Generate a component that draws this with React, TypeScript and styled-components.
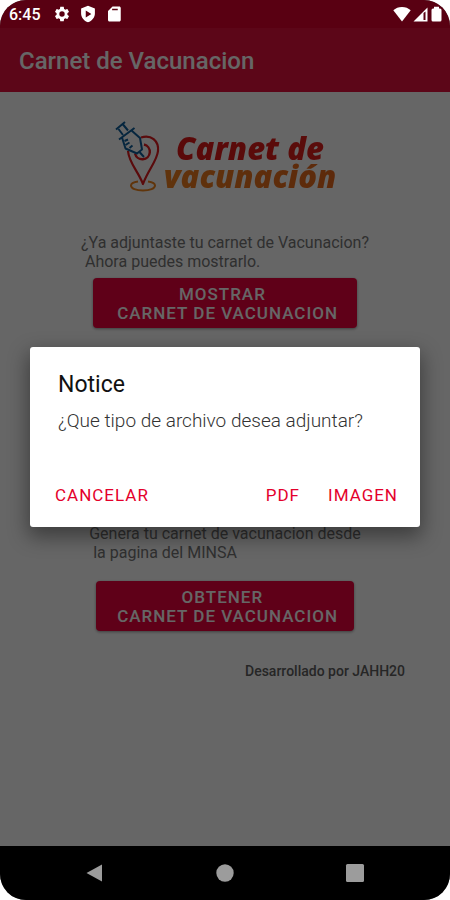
import styled, { createGlobalStyle } from "styled-components";

const App = () => {
  return (
    <>
      <GlobalStyle />
      <Screen>
        <StatusBar>
          <StatusGroup>
            <Clock>6:45</Clock>
            <SettingsIcon />
            <ShieldIcon />
            <SdCardIcon />
          </StatusGroup>
          <StatusGroup $tight>
            <WifiIcon />
            <SignalIcon />
            <BatteryIcon />
          </StatusGroup>
        </StatusBar>

        <AppBar>
          <AppTitle>Carnet de Vacunacion</AppTitle>
        </AppBar>

        <Content>
          <Logo>
            <PinIcon />
            <LogoText>
              <LogoLine $from="#e01818" $to="#e0201c">
                Carnet de
              </LogoLine>
              <LogoLine $from="#f08020" $to="#e8681c">
                vacunación
              </LogoLine>
            </LogoText>
          </Logo>

          <Section>
            <Description>
              {"¿Ya adjuntaste tu carnet de Vacunacion?\n Ahora puedes mostrarlo."}
            </Description>
            <MainButton $padding={19}>
              {"MOSTRAR \n CARNET DE VACUNACION"}
            </MainButton>
          </Section>

          <Section $spaced>
            <Description>
              {"Genera tu carnet de vacunacion desde\n la pagina del MINSA"}
            </Description>
            <MainButton $padding={16}>
              {"OBTENER \n CARNET DE VACUNACION"}
            </MainButton>
          </Section>

          <Credits>Desarrollado por JAHH20</Credits>
        </Content>

        <Scrim>
          <Dialog role="dialog" aria-labelledby="notice-title">
            <DialogTitle id="notice-title">Notice</DialogTitle>
            <DialogMessage>¿Que tipo de archivo desea adjuntar?</DialogMessage>
            <DialogActions>
              <DialogButton>CANCELAR</DialogButton>
              <Spacer />
              <DialogButton>PDF</DialogButton>
              <DialogButton>IMAGEN</DialogButton>
            </DialogActions>
          </Dialog>
        </Scrim>

        <NavBar>
          <NavButton aria-label="Back">
            <svg width="20" height="20" viewBox="0 0 20 20">
              <path d="M17 1.5v17L1.5 10z" />
            </svg>
          </NavButton>
          <NavButton aria-label="Home">
            <svg width="20" height="20" viewBox="0 0 20 20">
              <circle cx="10" cy="10" r="8.7" />
            </svg>
          </NavButton>
          <NavButton aria-label="Recents">
            <svg width="20" height="20" viewBox="0 0 20 20">
              <rect x="1" y="1" width="18" height="18" rx="1.5" />
            </svg>
          </NavButton>
        </NavBar>
      </Screen>
    </>
  );
};

export default App;

const SettingsIcon = () => (
  <svg width="18" height="18" viewBox="0 0 24 24" fill="#fff">
    <path d="M19.14 12.94c.04-.3.06-.61.06-.94 0-.32-.02-.64-.07-.94l2.03-1.58c.18-.14.23-.41.12-.61l-1.92-3.32c-.12-.22-.37-.29-.59-.22l-2.39.96c-.5-.38-1.03-.7-1.62-.94l-.36-2.54c-.04-.24-.24-.41-.48-.41h-3.84c-.24 0-.43.17-.47.41l-.36 2.54c-.59.24-1.13.57-1.62.94l-2.39-.96c-.22-.08-.47 0-.59.22L2.74 8.87c-.12.21-.08.47.12.61l2.03 1.58c-.05.3-.09.63-.09.94s.02.64.07.94l-2.03 1.58c-.18.14-.23.41-.12.61l1.92 3.32c.12.22.37.29.59.22l2.39-.96c.5.38 1.03.7 1.62.94l.36 2.54c.05.24.24.41.48.41h3.84c.24 0 .44-.17.47-.41l.36-2.54c.59-.24 1.13-.56 1.62-.94l2.39.96c.22.08.47 0 .59-.22l1.92-3.32c.12-.22.07-.47-.12-.61l-2.01-1.58zM12 15.6A3.6 3.6 0 1 1 12 8.4a3.6 3.6 0 0 1 0 7.2z" />
  </svg>
);

const ShieldIcon = () => (
  <svg width="18" height="18" viewBox="0 0 24 24" fill="#fff">
    <path
      fillRule="evenodd"
      d="M12 1L2.8 4.6v6.8c0 5.2 3.9 10 9.2 11.6 5.3-1.6 9.2-6.4 9.2-11.6V4.6zM9 7.2l7.5 4.8L9 16.8z"
    />
  </svg>
);

const SdCardIcon = () => (
  <svg width="18" height="18" viewBox="0 0 24 24" fill="#fff">
    <path
      fillRule="evenodd"
      d="M19 2h-9L4 8v12c0 1.1.9 2 2 2h13c1.1 0 2-.9 2-2V4c0-1.1-.9-2-2-2zM9.5 5h7.5v2H9.5z"
    />
  </svg>
);

const WifiIcon = () => (
  <svg width="18" height="16" viewBox="0 0 18 16" fill="#fff">
    <path d="M9 15.5L.3 4.3C2.6 2.2 5.6 1 9 1s6.4 1.2 8.7 3.3z" />
  </svg>
);

const SignalIcon = () => (
  <svg width="16" height="16" viewBox="0 0 16 16">
    <path d="M.5 15.5L14.5 1.5v14z" fill="#fff" />
    <path d="M10.5 7l2-1.5v8.5h-2z" fill="#590012" />
  </svg>
);

const BatteryIcon = () => (
  <svg width="11" height="16" viewBox="0 0 11 16" fill="#fff">
    <path d="M3 .8h5v1.7h1q1.5 0 1.5 1.5v10q0 1.5-1.5 1.5h-7Q.5 15.5.5 14V4q0-1.5 1.5-1.5h1z" />
  </svg>
);

const PinIcon = () => (
  <svg width="50" height="74" viewBox="0 0 50 74" fill="none">
    <path
      d="M24 61.5c-4 .5-7 2-7 4 0 3 5 5 12 5s12-2 12-5c0-2-3-3.5-7-4"
      stroke="#f0841c"
      strokeWidth="2"
    />
    <path
      d="M27 17.5C37 14 45 21 44 31 43 41 34 50 29 64 24 51 15 43 14 31"
      stroke="#e01c20"
      strokeWidth="2.2"
      strokeLinejoin="round"
    />
    <path
      d="M30 24.5a7.5 7.5 0 1 1-9 9"
      stroke="#e01c20"
      strokeWidth="2.4"
    />
    <g stroke="#10609c" strokeWidth="2" strokeLinejoin="round">
      <path d="M2 9.5L11 2M4.5 9l4.500 6M9 4.5l5 6" />
      <path d="M5 19.5L20.5 8M8 17.5l3.5 11 11.5 5 5-4L26 18 17.5 10.5" />
      <path d="M10.5 21l3.5-1.5M11.5 25l4-2.5M15.5 28l3-2.5M25.5 32l4.5 5" />
    </g>
  </svg>
);

const GlobalStyle = createGlobalStyle`
  body {
    margin: 0;
    background: #fff;
    font-family: Roboto, sans-serif;
  }

  * {
    box-sizing: border-box;
  }
`;

const Screen = styled.div`
  position: relative;

  display: flex;
  flex-direction: column;

  min-height: 100vh;

  border-radius: 26px;
  overflow: hidden;

  background: #fff;
`;

const StatusBar = styled.div`
  position: relative;
  z-index: 2;

  display: flex;
  justify-content: space-between;
  align-items: center;

  height: 28px;
  padding: 0 8px 0 9px;

  background: #590012;
`;

const StatusGroup = styled.div<{ $tight?: boolean }>`
  display: flex;
  align-items: center;
  gap: ${({ $tight }) => ($tight ? "2px" : "8px")};
`;

const Clock = styled.span`
  margin-right: 4px;

  color: #fff;

  font-size: 16px;
  font-weight: 500;
`;

const AppBar = styled.header`
  display: flex;
  align-items: center;

  height: 64px;
  padding: 2px 19px 0;

  background: #e60f3c;
`;

const AppTitle = styled.h1`
  margin: 0;

  color: #fff;

  font-size: 24px;
  font-weight: 500;
`;

const Content = styled.main`
  display: flex;
  flex: 1;
  flex-direction: column;
  align-items: center;

  padding: 28px 0;
`;

const Logo = styled.div`
  display: flex;
  align-items: flex-start;

  height: 74px;
`;

const LogoText = styled.div`
  display: flex;
  flex-direction: column;
  align-items: center;

  padding-top: 14px;
`;

const LogoLine = styled.span<{ $from: string; $to: string }>`
  background: linear-gradient(
    90deg,
    ${({ $from }) => $from},
    ${({ $to }) => $to}
  );
  background-clip: text;
  color: transparent;

  font-family: "Open Sans", sans-serif;
  font-size: 31px;
  font-style: italic;
  font-weight: 800;
  line-height: 28px;
`;

const Section = styled.section<{ $spaced?: boolean }>`
  display: flex;
  flex-direction: column;
  align-items: center;
  gap: ${({ $spaced }) => ($spaced ? "19px" : "7px")};

  margin-top: ${({ $spaced }) => ($spaced ? "196px" : "39px")};
`;

const Description = styled.p`
  margin: 0;

  color: #777;

  font-size: 16px;
  line-height: 19px;
  white-space: pre;
`;

const MainButton = styled.button<{ $padding: number }>`
  padding: 7px ${({ $padding }) => $padding}px 5px;

  border: none;
  border-radius: 4px;
  box-shadow: 0 1px 3px rgba(0, 0, 0, 0.4);

  background: #ee003c;
  color: #fff;

  font-family: inherit;
  font-size: 17px;
  font-weight: 500;
  line-height: 19px;
  letter-spacing: 1px;
  white-space: pre;
`;

const Credits = styled.p`
  align-self: flex-end;

  margin: 32px 45px 0 0;

  color: #606060;

  font-size: 14px;
  font-weight: 500;
  line-height: 16px;
`;

const Scrim = styled.div`
  position: absolute;
  inset: 0;
  z-index: 1;

  display: flex;
  align-items: center;

  padding: 28px 30px 54px;

  background: rgba(0, 0, 0, 0.6);
`;

const Dialog = styled.div`
  flex: 1;

  border-radius: 3px;
  box-shadow: 0 8px 20px 2px rgba(0, 0, 0, 0.4);

  background: #fff;
`;

const DialogTitle = styled.h2`
  margin: 0;
  padding: 24px 28px 0;

  color: #111;

  font-size: 23px;
  font-weight: 400;
  line-height: 28px;
`;

const DialogMessage = styled.p`
  margin: 0;
  padding: 10px 28px 0;

  color: #333;

  font-size: 19px;
  font-weight: 300;
  line-height: 24px;
`;

const DialogActions = styled.div`
  display: flex;
  align-items: center;

  padding: 40px 8px 10px 11px;
`;

const DialogButton = styled.button`
  height: 44px;
  padding: 0 14px;

  border: none;

  background: none;
  color: #e4002b;

  font-family: inherit;
  font-size: 17px;
  font-weight: 400;
  letter-spacing: 1px;
`;

const Spacer = styled.div`
  flex: 1;
`;

const NavBar = styled.nav`
  position: relative;
  z-index: 2;

  display: flex;
  justify-content: center;
  align-items: center;
  gap: 70px;

  height: 54px;

  background: #000;
`;

const NavButton = styled.button`
  display: flex;
  justify-content: center;

  width: 60px;
  padding: 0;

  border: none;

  background: none;

  svg {
    fill: #9c9c9c;
  }
`;
